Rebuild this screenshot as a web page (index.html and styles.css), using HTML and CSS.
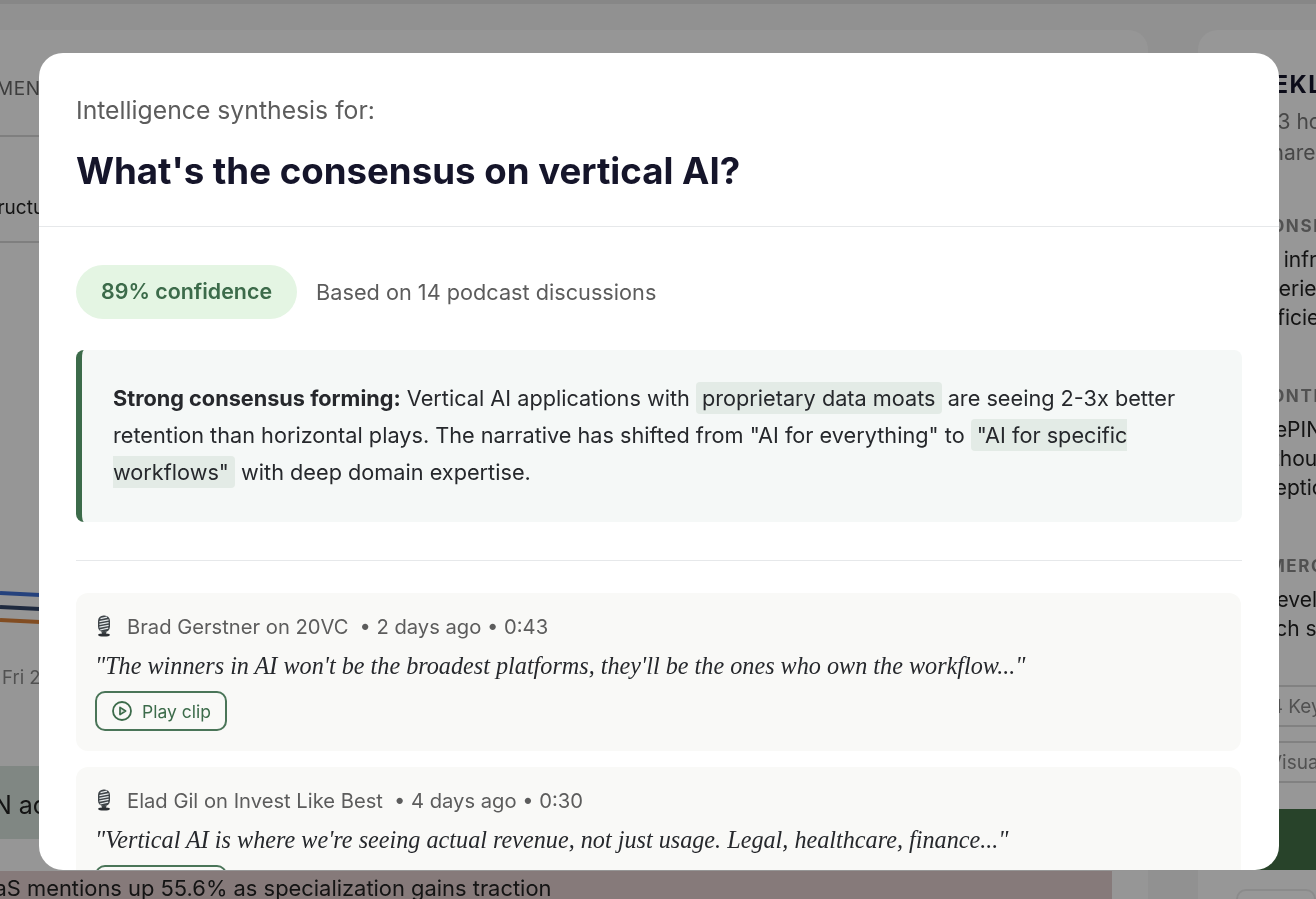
FILE: index.html
```html
<!doctype html>
<html lang="en-US">
  <head>
    <meta charset="utf-8" />
    <title>Podcast Intelligence</title>
    <link rel="stylesheet" href="styles.css">
  </head>
  <body>
    <div class="page">
      <main class="main-panel">
        <div class="tab-row"><span>MENTIONS</span></div>
        <div class="topic-row"><span>Infrastructure</span></div>
        <div class="chart">
          <svg class="chart-lines" width="60" height="70" viewBox="0 0 60 70">
            <path d="M0 30 L60 33" stroke="#3f6fd0" />
            <path d="M0 44 L60 47" stroke="#33466a" />
            <path d="M0 57 L60 60" stroke="#d9803a" />
          </svg>
          <div class="chart-axis">Fri 23</div>
        </div>
        <div class="insight-green"><span>RAG IN action</span></div>
        <div class="insight-red"><span>Horizontal SaaS mentions up 55.6% as specialization gains traction</span></div>
      </main>
      <aside class="side-panel">
        <h2>WEEKLY BRIEF</h2>
        <p class="side-sub">Last 3 hours</p>
        <p class="side-sub">To share</p>
        <section class="side-section first">
          <h3>CONSENSUS</h3>
          <p>Core infrastructure</p>
          <p>Big series</p>
          <p>Coefficients</p>
        </section>
        <section class="side-section">
          <h3>CONTRARIAN</h3>
          <p>AcmePIN wins</p>
          <p>and though</p>
          <p>perception</p>
        </section>
        <section class="side-section">
          <h3>EMERGING</h3>
          <p>for developers</p>
          <p>Search stack</p>
        </section>
        <div class="side-links">
          <div class="side-link">14 Key takeaways</div>
          <div class="side-link">2 Visual maps</div>
        </div>
        <div class="side-cta"></div>
        <div class="side-outline"></div>
      </aside>
    </div>

    <div class="overlay">
      <div class="modal">
        <header class="modal-head">
          <p class="modal-eyebrow">Intelligence synthesis for:</p>
          <h1>What's the consensus on vertical AI?</h1>
        </header>
        <div class="modal-body">
          <div class="confidence-row">
            <span class="confidence-pill">89% confidence</span>
            <span class="confidence-note">Based on 14 podcast discussions</span>
          </div>
          <div class="callout">
            <strong>Strong consensus forming:</strong> Vertical AI applications with <mark>proprietary data moats</mark> are seeing 2-3x better retention than horizontal plays. The narrative has shifted from "AI for everything" to <mark>"AI for specific workflows"</mark> with deep domain expertise.
          </div>
          <hr class="divider">
          <article class="clip">
            <div class="clip-meta">
              <svg class="mic" width="18" height="22" viewBox="0 0 18 22"><use href="#mic-icon" /></svg>
              <span class="clip-source">Brad Gerstner on 20VC</span>
              <span>• 2 days ago • 0:43</span>
            </div>
            <p class="clip-quote">"The winners in AI won't be the broadest platforms, they'll be the ones who own the workflow..."</p>
            <button class="play-btn">
              <svg width="22" height="22" viewBox="0 0 22 22"><use href="#play-icon" /></svg>
              Play clip
            </button>
          </article>
          <article class="clip">
            <div class="clip-meta">
              <svg class="mic" width="18" height="22" viewBox="0 0 18 22"><use href="#mic-icon" /></svg>
              <span class="clip-source">Elad Gil on Invest Like Best</span>
              <span>• 4 days ago • 0:30</span>
            </div>
            <p class="clip-quote">"Vertical AI is where we're seeing actual revenue, not just usage. Legal, healthcare, finance..."</p>
            <button class="play-btn">
              <svg width="22" height="22" viewBox="0 0 22 22"><use href="#play-icon" /></svg>
              Play clip
            </button>
          </article>
        </div>
      </div>
    </div>

    <svg class="icon-defs" width="0" height="0">
      <symbol id="mic-icon" viewBox="0 0 18 22">
        <rect x="3" y="0.5" width="12" height="16.5" rx="5.5" fill="#3f4549" />
        <path d="M5.5 3.6 L12 2.2 M4.4 6.6 L13.6 4.8 M4.4 9.4 L13.6 7.6 M4.4 12.2 L13.6 10.4 M5 15 L13.2 13.2" stroke="#e6eaec" stroke-width="1.2" />
        <path d="M6.5 17 H11.5 L11 19 H7 Z" fill="#3f4549" />
        <ellipse cx="9" cy="20" rx="6" ry="1.6" fill="#2c3034" />
      </symbol>
      <symbol id="play-icon" viewBox="0 0 22 22">
        <circle cx="11" cy="11" r="9" fill="none" stroke="#3c6b4a" stroke-width="1.8" />
        <path d="M9 7.4 L14.6 11 L9 14.6 Z" fill="#3c6b4a" fill-opacity="0.15" stroke="#3c6b4a" stroke-width="1.7" stroke-linejoin="round" />
      </symbol>
    </svg>
  </body>
</html>
```

FILE: styles.css
```css
* {
	box-sizing: border-box;
}

html, body {
	margin: 0;
	height: 100%;
	overflow: hidden;
}

body {
	font-family: Inter, "Liberation Sans", sans-serif;
	background: #f2f2f2;
	color: #1a1a2e;
}

p, h1, h2, h3 {
	margin: 0;
}

/* page behind the modal */
.page {
	display: flex;
	gap: 50px;
	height: 899px;
	padding-top: 26px;
	border-top: 4px solid #e2e2e2;
	filter: blur(0.6px);
}

.main-panel {
	width: 1148px;
	flex: none;
	background: #fbfbfb;
	border-top-right-radius: 20px;
	overflow: hidden;
}

.tab-row {
	height: 107px;
	padding-top: 47px;
	border-bottom: 2px solid #d4d4d4;
	font-size: 19px;
	letter-spacing: 0.6px;
	color: #666;
	text-indent: -4px;
}

.topic-row {
	height: 106px;
	padding-top: 59px;
	border-bottom: 2px solid #d4d4d4;
	font-size: 19px;
	color: #222;
	text-indent: -60px;
}

.chart {
	height: 523px;
	padding-top: 320px;
}

.chart-lines {
	display: block;
	fill: none;
	stroke-width: 4;
}

.chart-axis {
	margin-top: 33px;
	font-size: 18.5px;
	color: #888;
	text-indent: 2px;
}

.insight-green {
	height: 73px;
	padding-top: 24px;
	background: #d5e2da;
	font-size: 25px;
	color: #222;
	text-indent: -72px;
}

.insight-red {
	margin: 32px 36px 0 0;
	padding-top: 4px;
	height: 60px;
	background: #e0cccc;
	font-size: 21.9px;
	color: #222;
	text-indent: -144px;
	white-space: nowrap;
}

.side-panel {
	flex: 1;
	padding: 40px 0 0 32px;
	background: #fcfcfc;
	border-top-left-radius: 20px;
	white-space: nowrap;
	overflow: hidden;
}

.side-panel h2 {
	margin-left: 1px;
	margin-bottom: 10px;
	font-size: 24px;
	letter-spacing: 1.5px;
	color: #15152a;
}

.side-sub {
	margin-top: 6px;
	font-size: 21px;
	color: #777;
}

.side-section {
	margin-top: 44px;
	padding-top: 10px;
}

.side-section.first {
	margin-top: 41px;
}

.side-section h3 {
	margin-left: 27px;
	margin-bottom: 9px;
	font-size: 17px;
	letter-spacing: 1.6px;
	color: #888;
}

.side-section p {
	font-size: 21px;
	line-height: 29px;
	color: #222;
}

.side-links {
	margin-top: 42px;
}

.side-link {
	margin-bottom: 14px;
	height: 42px;
	padding-left: 33px;
	line-height: 40px;
	border-top: 2px solid #d8d8d8;
	border-bottom: 2px solid #d8d8d8;
	font-size: 19px;
	color: #888;
}

.side-link:last-child {
	padding-left: 22px;
}

.side-cta {
	height: 61px;
	margin: 26px 0 0 -32px;
	background: #437046;
}

.side-outline {
	height: 40px;
	margin: 19px 0 0 6px;
	border: 2px solid #e8e8e8;
	border-radius: 10px;
}

/* modal */
.overlay {
	position: fixed;
	inset: 0;
	display: flex;
	padding: 53px 37px 29px 39px;
	background: rgba(0, 0, 0, 0.4);
}

.modal {
	flex: 1;
	background: #fff;
	border-radius: 24px;
	overflow: hidden;
}

.modal-head {
	height: 174px;
	padding: 42px 37px 0;
	border-bottom: 1px solid #e6e8ea;
}

.modal-eyebrow {
	font-size: 24.75px;
	line-height: 30px;
	color: #5c5c5c;
}

.modal-head h1 {
	margin-top: 24px;
	font-size: 36.65px;
	line-height: 44px;
	font-weight: 700;
	color: #15152a;
}

.modal-body {
	padding: 38px 37px 0;
}

.confidence-row {
	display: flex;
	align-items: center;
	gap: 19px;
}

.confidence-pill {
	height: 54px;
	padding: 0 25px;
	border-radius: 27px;
	background: #e4f5e3;
	font-size: 21.4px;
	font-weight: 600;
	line-height: 52px;
	color: #3c6b4a;
}

.confidence-note {
	font-size: 21.7px;
	color: #5c5c5c;
}

.callout {
	margin-top: 31px;
	height: 172px;
	padding: 30px 37px 0 31px;
	border-left: 6px solid #3c6b4a;
	border-radius: 8px;
	background: #f5f8f7;
	font-size: 21.7px;
	line-height: 37px;
	color: #26282c;
}

.callout strong {
	font-weight: 700;
}

.callout mark {
	padding: 3px 6px;
	border-radius: 4px;
	background: #e3ebe6;
	color: inherit;
}

.divider {
	margin: 38px 0 32px;
	border: 0;
	border-top: 1px solid #e6e8ea;
}

.clip {
	height: 158px;
	margin-bottom: 16px;
	margin-right: 1px;
	padding: 19px 19px 0;
	border-radius: 12px;
	background: #f9f9f7;
}

.clip-meta {
	display: flex;
	align-items: center;
	height: 28px;
	font-size: 20.2px;
	color: #5c5c5c;
}

.mic {
	margin-right: 14px;
}

.clip-source {
	margin-right: 11px;
}

.clip-quote {
	margin-top: 11px;
	font-family: "Liberation Serif", serif;
	font-style: italic;
	font-size: 24.2px;
	line-height: 30px;
	color: #26282c;
}

.play-btn {
	display: flex;
	align-items: center;
	gap: 9px;
	height: 40px;
	margin-top: 10px;
	padding: 0 14px;
	border: 2px solid #4a7558;
	border-radius: 10px;
	background: transparent;
	font-family: inherit;
	font-size: 17.5px;
	color: #3c6b4a;
}

.icon-defs {
	position: absolute;
}
```
